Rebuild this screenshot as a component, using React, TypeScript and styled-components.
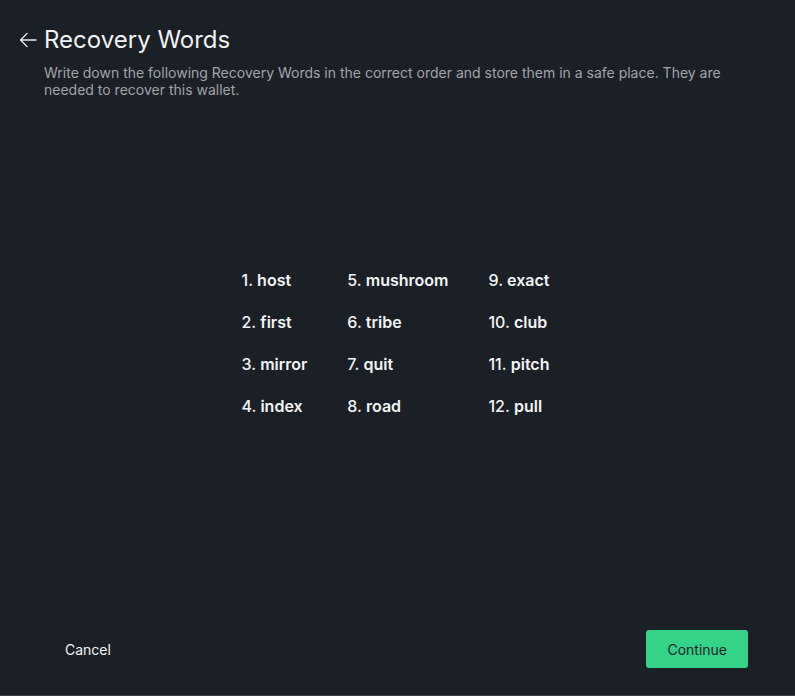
import React from "react";
import styled, { createGlobalStyle } from "styled-components";

const Global = createGlobalStyle`
  html, body { margin: 0; padding: 0; background: #1b1f26; }
  body { font-family: Inter, "Noto Sans", sans-serif; -webkit-font-smoothing: antialiased; }
  * { box-sizing: border-box; }
`;

const Page = styled.div`
  height: 696px;
  display: flex;
  flex-direction: column;
  background: #1b1f26;
  border-bottom: 1px solid #3a3e45;
`;

const Header = styled.header`
  padding: 26px 20px 0 18px;
`;

const TitleRow = styled.div`
  display: flex;
  align-items: center;
  gap: 6px;
`;

const BackButton = styled.button`
  background: none;
  border: none;
  padding: 0;
  width: 20px;
  height: 20px;
  display: flex;
  align-items: center;
  justify-content: center;
  color: #e8e9eb;
  cursor: pointer;
`;

const Title = styled.h1`
  margin: 0;
  font-size: 24px;
  font-weight: 400;
  color: #f1f2f3;
  line-height: 28px;
`;

const Subtitle = styled.p`
  margin: 10px 0 0 26px;
  font-size: 14px;
  line-height: 17px;
  color: #a2a5aa;
  max-width: 700px;
`;

const Body = styled.main`
  flex: 1;
  display: flex;
  align-items: center;
  justify-content: center;
  padding: 0 4px 42px 0;
`;

const WordGrid = styled.ol`
  list-style: none;
  margin: 0;
  padding: 0;
  display: grid;
  grid-template-rows: repeat(4, 42px);
  grid-auto-flow: column;
  column-gap: 40px;
  align-items: center;
`;

const WordItem = styled.li`
  font-size: 16px;
  color: #f3f4f5;
  white-space: nowrap;
`;

const Num = styled.span`
  font-weight: 500;
`;

const Word = styled.span`
  font-weight: 600;
`;

const Footer = styled.footer`
  display: flex;
  justify-content: space-between;
  align-items: center;
  padding: 0 47px 27px 49px;
`;

const Button = styled.button<{ $primary?: boolean }>`
  font-family: inherit;
  font-size: 14px;
  height: 38px;
  padding: 0 ${(p) => (p.$primary ? "21px" : "16px")};
  border-radius: 3px;
  border: none;
  cursor: pointer;
  background: ${(p) => (p.$primary ? "#35d388" : "transparent")};
  color: ${(p) => (p.$primary ? "#1b1f26" : "#f3f4f5")};
`;

const words = [
  "host", "first", "mirror", "index",
  "mushroom", "tribe", "quit", "road",
  "exact", "club", "pitch", "pull",
];

export default function App() {
  return (
    <>
      <Global />
      <Page>
        <Header>
          <TitleRow>
            <BackButton aria-label="Back">
              <svg width="18" height="16" viewBox="0 0 18 16" fill="none" stroke="currentColor" strokeWidth="1.3" strokeLinecap="round" strokeLinejoin="round">
                <path d="M17 8H2M8 1.5L1.5 8L8 14.5" />
              </svg>
            </BackButton>
            <Title>Recovery Words</Title>
          </TitleRow>
          <Subtitle>
            Write down the following Recovery Words in the correct order and store them in a safe place. They are needed to recover this wallet.
          </Subtitle>
        </Header>
        <Body>
          <WordGrid>
            {words.map((w, i) => (
              <WordItem key={i}>
                <Num>{i + 1}. </Num>
                <Word>{w}</Word>
              </WordItem>
            ))}
          </WordGrid>
        </Body>
        <Footer>
          <Button>Cancel</Button>
          <Button $primary>Continue</Button>
        </Footer>
      </Page>
    </>
  );
}
